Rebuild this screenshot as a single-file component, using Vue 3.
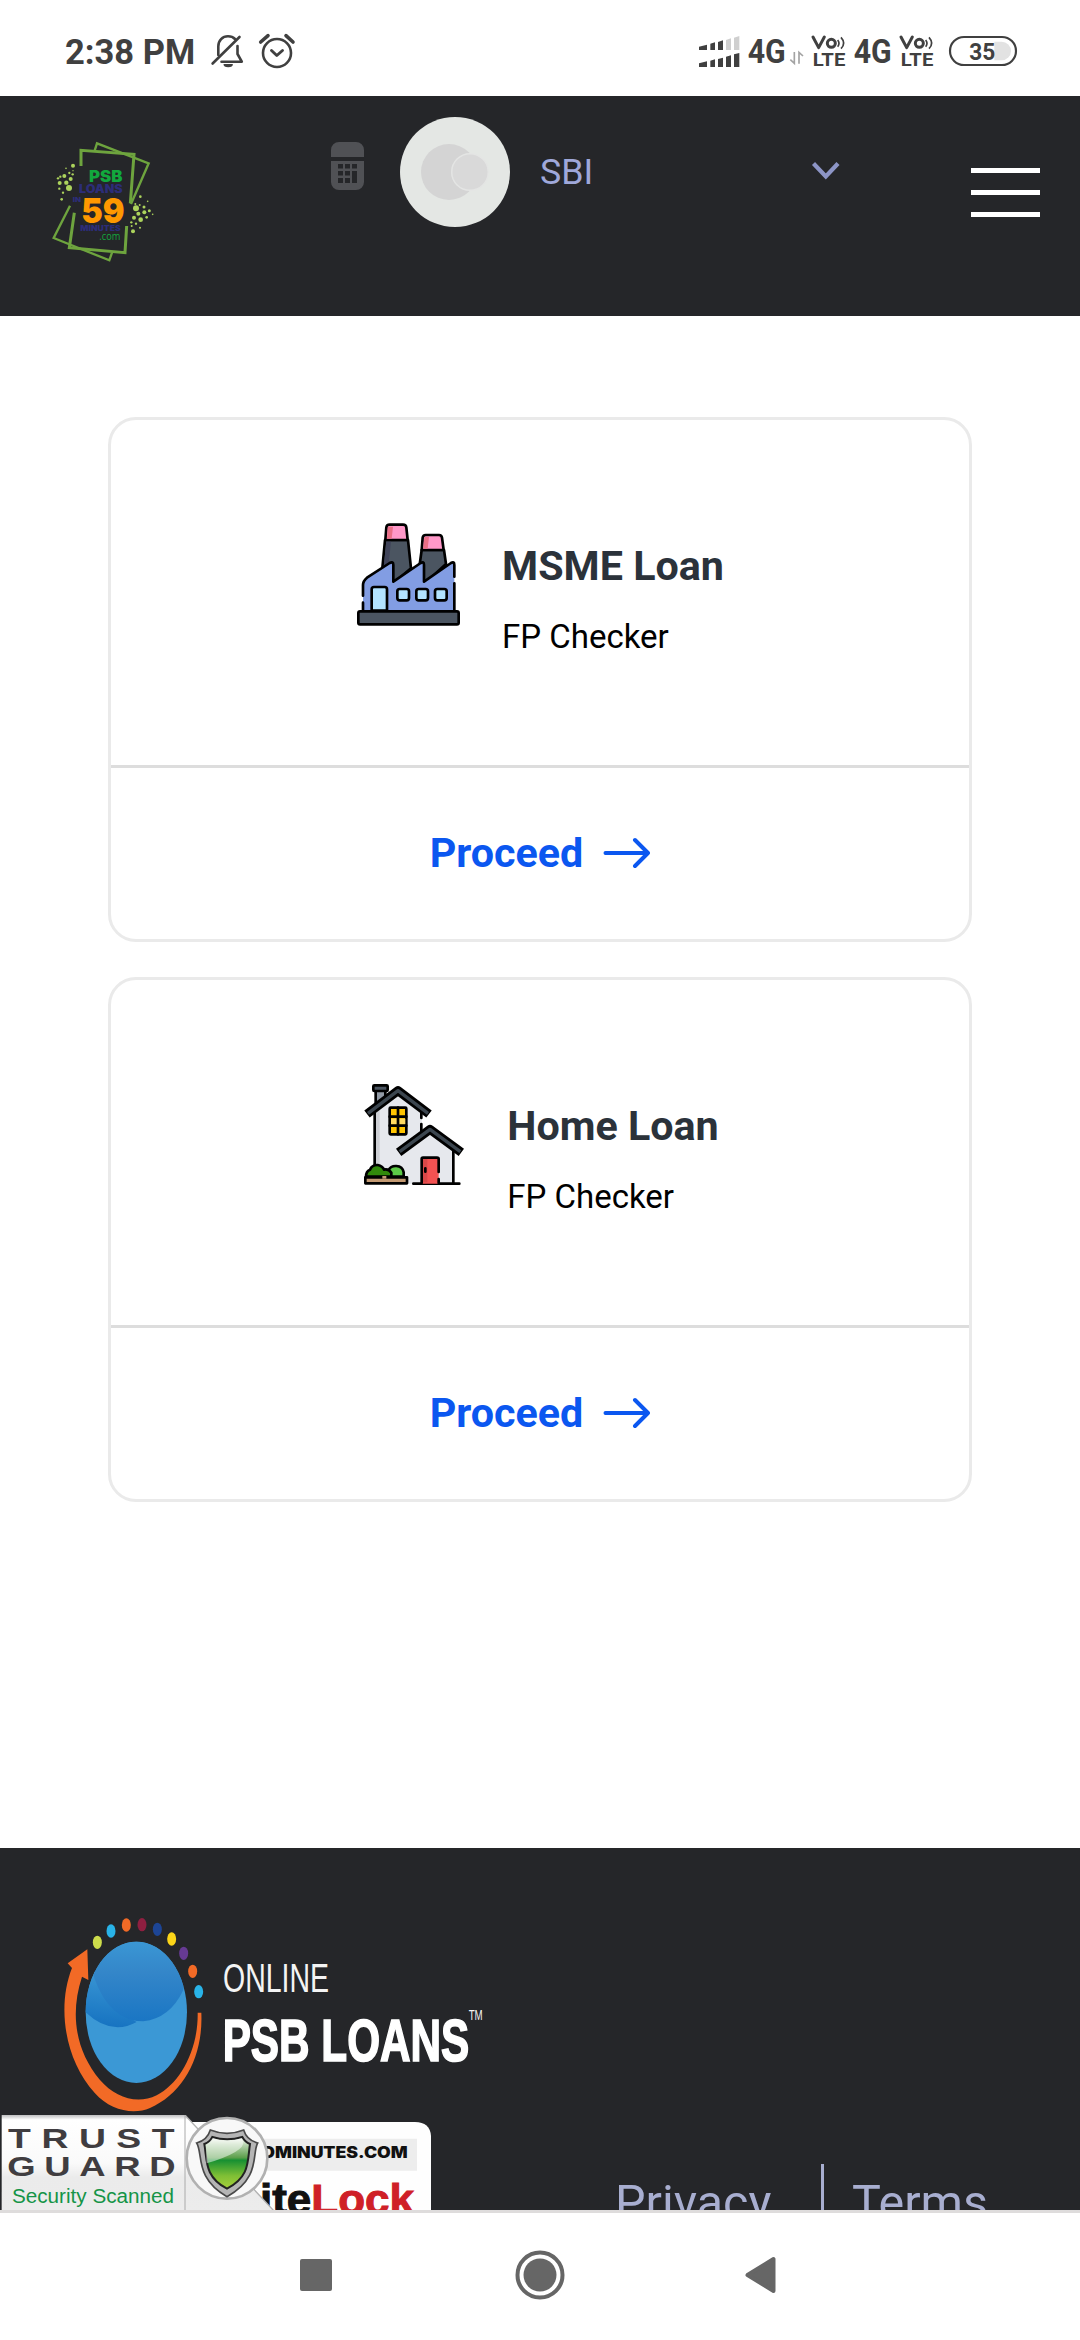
<script setup>
const loans = [
  { id: 'msme', title: 'MSME Loan', note: 'FP Checker' },
  { id: 'home', title: 'Home Loan', note: 'FP Checker' },
]

const leftDots = [
  [129, 137, 6], [108, 145, 2.5], [129, 152, 2], [118, 159, 3.5], [103, 168, 6], [128, 163, 3.5],
  [91, 170, 3.5], [84, 175, 3.5], [122, 177, 6], [89, 189, 6], [109, 188, 6.5], [117, 204, 9],
  [88, 206, 3.5], [99, 218, 3.5], [95, 238, 4],
]
const rightDots = [
  [331, 230, 4], [353, 244, 2.5], [316, 252, 3], [329, 255, 3], [318, 265, 9], [342, 261, 4.5],
  [358, 272, 4.5], [343, 277, 6], [325, 281, 6], [368, 283, 2.5], [312, 293, 6], [332, 299, 7],
  [350, 292, 4], [304, 307, 3.5], [318, 311, 3.5], [309, 334, 6], [330, 323, 3], [305, 318, 3],
]
const orbitDots = [
  [172, 157, '#cddc4b'], [213, 123, '#29b3e8'], [259, 105, '#f26a26'], [306, 104, '#8f1f40'],
  [352, 118, '#1d4595'], [395, 147, '#fcd518'], [431, 190, '#663a93'], [458, 244, '#f26a26'],
  [476, 305, '#29b3e8'],
]
</script>

<template>
  <div class="screen">
    <div class="status">
      <span class="clock">2:38 PM</span>
      <svg class="alerts" width="88" height="38" viewBox="209 32 88 38" fill="none" stroke="#404040" stroke-width="2.6" stroke-linecap="round">
        <path d="M218.3 55V46.500C218.300 40.500 222.500 36.300 228 36.300C231 36.300 233.400 37.300 235 39" />
        <path d="M237.500 46V54L241.800 61.700H221.500" stroke-linejoin="round" />
        <path d="M212.600 63.500L239.500 37" />
        <path d="M223.500 64h9.400a4.700 3.200 0 0 1-9.400 0z" fill="#404040" stroke="none" />
        <circle cx="277" cy="53" r="14" />
        <path d="M271.500 50.500L276.800 55.500L282.500 50.500" stroke-width="2.900" stroke-linejoin="round" />
        <path d="M260.700 42L268 35.700M293 42L286 35.700" stroke-width="3.600" />
      </svg>
      <svg class="network" width="322" height="38" viewBox="108 96 966 114">
        <g fill="#404040">
          <path d="M114 140l24-6v16h-24zM148 131l14-4v23h-14zM171 126l15-5v29h-15z" />
          <path d="M114 190l24-6v17h-24zM148 182l14-4v23h-14zM171 177l15-4v28h-15zM195 170l15-4v35h-15zM219 163l16-4v42h-16z" />
        </g>
        <path d="M195 120l15-5v35h-15zM219 113l16-5v42h-16z" fill="#cfcfcf" />
        <g class="net">
          <text x="260" y="188" font-size="97" textLength="114" lengthAdjust="spacingAndGlyphs">4G</text>
          <text x="578" y="188" font-size="97" textLength="114" lengthAdjust="spacingAndGlyphs">4G</text>
        </g>
        <path d="M400 156v34l-12-11M414 191v-34l12 11" fill="none" stroke="#a3a3a3" stroke-width="5" />
        <g v-for="x in [0, 264]" :key="x" :transform="`translate(${x} 0)`">
          <path d="M456 111l17 32 17-32" fill="none" stroke="#404040" stroke-width="9" stroke-linejoin="round" stroke-linecap="round" />
          <circle cx="511" cy="130" r="12" fill="none" stroke="#404040" stroke-width="9" />
          <path d="M530 120q8 10 0 20M540 112q16 18 0 34" fill="none" stroke="#404040" stroke-width="5" />
          <text class="lte" x="455" y="197" font-size="54" textLength="98" lengthAdjust="spacingAndGlyphs">LTE</text>
        </g>
        <path d="M1000 125h22a28 28 0 0 1 0 56h-22z" fill="#e2e2e2" />
        <rect x="867" y="111" width="198" height="84" rx="42" fill="none" stroke="#404040" stroke-width="6.500" />
        <text class="level" x="925" y="179" font-size="73" textLength="78" lengthAdjust="spacingAndGlyphs">35</text>
      </svg>
    </div>

    <header class="header">
      <svg class="logo" width="105" height="124" viewBox="60 60 315 372">
        <g fill="none" stroke="#6ea43e" stroke-width="9">
          <path d="M153 138V91L312 103L301 250" />
          <path d="M133 278L118 383L285 398L290 318" />
          <path d="M194 92L201 70L356 130L303 252" stroke-width="7" />
          <path d="M120 257L71 354L238 421L246 398" stroke-width="7" />
        </g>
        <g fill="#acd35c">
          <circle v-for="(d, i) in leftDots" :key="`l${i}`" :cx="d[0]" :cy="d[1]" :r="d[2]" />
          <circle v-for="(d, i) in rightDots" :key="`r${i}`" :cx="d[0]" :cy="d[1]" :r="d[2]" />
        </g>
        <g class="heavy">
          <text x="177" y="186" font-size="47" fill="#12a83d" textLength="100" lengthAdjust="spacingAndGlyphs">PSB</text>
          <text x="147" y="219" font-size="34" fill="#2c2d78" textLength="131" lengthAdjust="spacingAndGlyphs">LOANS</text>
          <text x="128" y="245" font-size="20" fill="#2c2d78" textLength="25" lengthAdjust="spacingAndGlyphs">IN</text>
          <text x="154" y="308" font-size="102" fill="#ff9800" textLength="130" lengthAdjust="spacingAndGlyphs">59</text>
          <text x="151" y="333" font-size="22" fill="#2c2d78" textLength="121" lengthAdjust="spacingAndGlyphs">MINUTES</text>
        </g>
        <text class="dotcom" x="208" y="359" font-size="32" fill="#12a83d" textLength="63" lengthAdjust="spacingAndGlyphs">.com</text>
      </svg>
      <svg class="calc" width="33" height="48" viewBox="0 0 33 48">
        <path d="M0 15V8a8 8 0 0 1 8-8h17a8 8 0 0 1 8 8v7zM0 19h33v21a8 8 0 0 1-8 8H8a8 8 0 0 1-8-8z" fill="#505155" />
        <path d="M7 22h5v4.500H7zM14 22h5v4.500h-5zM21 22h5v4.500h-5zM7 29h5v4.500H7zM14 29h5v4.500h-5zM21 29h5v12h-5zM7 36h5v5H7zM14 36h5v5h-5z" fill="#252629" />
      </svg>
      <svg class="avatar" width="110" height="110" viewBox="0 0 110 110">
        <circle cx="55" cy="55" r="55" fill="#e4e7e4" />
        <circle cx="49" cy="55" r="28" fill="#d4d4d4" />
        <circle cx="70" cy="55" r="18.300" fill="#d9d9d9" stroke="#e4e5e4" stroke-width="1.500" />
      </svg>
      <div class="bank">
        <span>SBI</span>
        <svg width="32" height="22" viewBox="0 0 32 22"><path d="M3.500 3.500L15.800 16.500L28 3.500" fill="none" stroke="#8d95c6" stroke-width="4.200" /></svg>
      </div>
      <div class="menu"><i></i><i></i><i></i></div>
    </header>

    <main class="main">
      <section v-for="loan in loans" :key="loan.id" class="card">
        <div class="info">
          <svg v-if="loan.id === 'msme'" width="106" height="106" viewBox="78 93 318 318" stroke="#000" stroke-width="8" stroke-linejoin="round" stroke-linecap="round">
            <path d="M157 235L165 150H234L243 235L190 280z" fill="#4b5561" />
            <path d="M161 230L169 154H183L176 222z" fill="#40445a" stroke="none" />
            <path d="M166 150L169 112Q170 104 179 104H219Q228 104 229 112L233 150z" fill="#ff98c9" />
            <path d="M171 146L174 110H189L185 146z" fill="#ea6f86" stroke="none" />
            <path d="M267 238L275 180H342L348 222L285 280z" fill="#4b5561" />
            <path d="M275 180L278 143Q279 135 287 135H327Q335 135 336 143L341 180z" fill="#ff98c9" />
            <path d="M280 176L283 141H297L293 176z" fill="#ea6f86" stroke="none" />
            <path d="M99 363V285Q99 273 111 263L179 219Q190 213 190 225V275L272 219Q282 213 282 225V275L363 219Q373 213 373 225V363z" fill="#829de3" stroke="none" />
            <path d="M99 317V285Q99 273 111 263L179 219Q190 213 190 225V275L272 219Q282 213 282 225V275L363 219Q373 213 373 225V260M373 280V360M99 338V360" fill="none" />
            <path d="M125 362V298Q125 291 132 291H164Q171 291 171 298V362z" fill="#b2e3ff" />
            <rect x="202" y="297" width="35" height="34" rx="7" fill="#b2e3ff" />
            <rect x="259" y="297" width="35" height="34" rx="7" fill="#b2e3ff" />
            <rect x="315" y="297" width="35" height="34" rx="7" fill="#b2e3ff" />
            <rect x="85" y="364" width="301" height="39" rx="5" fill="#4b5561" />
          </svg>
          <svg v-else width="106" height="106" viewBox="93 63 318 318" stroke="#000" stroke-width="8" stroke-linejoin="round" stroke-linecap="round">
            <path d="M134 371V145L204 98L275 150V218L300 210L370 265V371z" fill="#e6e8ed" stroke="none" />
            <path d="M138 145V320H149V135z" fill="#cdcfd4" stroke="none" />
            <path d="M137 92H166V118L137 138z" fill="#929aa5" />
            <rect x="130" y="76" width="43" height="17" rx="3" fill="#4b5561" />
            <path d="M134 158V320M274 158V174M274 192V216M370 268V371M250 371H388" fill="none" />
            <path d="M111 162L204 92L297 162" fill="none" stroke-width="27" stroke-linecap="butt" />
            <path d="M114 160L204 92L294 160" fill="none" stroke="#3c464f" stroke-width="10" stroke-linecap="butt" />
            <path d="M206 277L300 208L394 277" fill="none" stroke-width="27" stroke-linecap="butt" />
            <path d="M209 275L300 208L391 275" fill="none" stroke="#3c464f" stroke-width="10" stroke-linecap="butt" />
            <rect x="179" y="143" width="50" height="80" rx="3" fill="#ffc400" />
            <path d="M183 176H226V193H183z" fill="#ffda62" stroke="none" />
            <path d="M204 143V223M179 170H229M179 197H229" fill="none" />
            <path d="M275 371V297Q275 293 279 293H321Q326 293 326 297V371z" fill="#f25252" stroke="none" />
            <path d="M279 297H292V367H279z" fill="#d84848" stroke="none" />
            <path d="M275 369V297Q275 293 279 293H321Q326 293 326 297V336M326 357V369M286 325V335" fill="none" />
            <path d="M176 350V330Q182 317 199 318Q218 319 221 337V350z" fill="#5cc947" />
            <path d="M108 350Q108 334 120 329Q126 314 143 315Q158 318 162 329Q176 326 184 338V350z" fill="#318a0b" />
            <path d="M106 352H231V370H106z" fill="#c39972" />
            <path d="M157 352H169" stroke="#c39972" stroke-linecap="butt" />
          </svg>
          <div class="words">
            <h2>{{ loan.title }}</h2>
            <p>{{ loan.note }}</p>
          </div>
        </div>
        <a class="proceed">
          <span>Proceed</span>
          <svg width="47" height="32" viewBox="0 0 47 32"><path d="M2.500 16H45M32 3L45 16L32 29" fill="none" stroke="#0b57f0" stroke-width="4" stroke-linecap="round" stroke-linejoin="round" /></svg>
        </a>
      </section>
    </main>

    <footer class="footer">
      <svg class="brand" width="430" height="200" viewBox="60 75 1290 600">
        <defs>
          <linearGradient id="cap" x1="0" y1="0" x2="0" y2="1"><stop offset="0" stop-color="#3b98d5" /><stop offset=".4" stop-color="#3486c9" /><stop offset="1" stop-color="#1a76c4" /></linearGradient>
          <linearGradient id="side" x1=".6" y1="0" x2=".5" y2="1"><stop offset="0" stop-color="#3c98d5" /><stop offset="1" stop-color="#1673c1" /></linearGradient>
          <clipPath id="globe"><ellipse cx="289" cy="367" rx="152" ry="212" /></clipPath>
        </defs>
        <ellipse cx="289" cy="367" rx="152" ry="212" fill="#3b98d5" />
        <g clip-path="url(#globe)">
          <path d="M130 240H163Q205 350 290 396Q210 440 130 360z" fill="url(#side)" />
          <path d="M163 265Q210 395 310 394Q390 385 430 300L440 150H140z" fill="url(#cap)" />
        </g>
        <ellipse v-for="d in orbitDots" :key="d[0]" :cx="d[0]" :cy="d[1]" rx="13.500" ry="20" :fill="d[2]" />
        <path d="M142 178L83 220L96 234C50 350 74 510 165 610C210 661 280 676 330 654C430 610 490 500 484 368H473C475 480 420 580 350 616C290 645 225 622 180 570C105 480 90 370 126 260L145 270z" fill="#f26a26" />
        <text class="online" x="549" y="307" font-size="120" textLength="318" lengthAdjust="spacingAndGlyphs">ONLINE</text>
        <text class="psb" x="548" y="514" font-size="178" textLength="740" lengthAdjust="spacingAndGlyphs">PSB LOANS</text>
        <text class="tm" x="1286" y="389" font-size="42" textLength="42" lengthAdjust="spacingAndGlyphs">TM</text>
      </svg>
      <div class="bottom">
        <svg class="seals" width="435" height="96" viewBox="0 45 1305 288">
          <defs>
            <linearGradient id="paper" x1="0" y1="0" x2="0" y2="1"><stop offset="0" stop-color="#bdbdbf" /><stop offset=".05" stop-color="#fff" /><stop offset=".5" stop-color="#fafafa" /><stop offset=".65" stop-color="#ebebeb" /><stop offset="1" stop-color="#ececec" /></linearGradient>
            <linearGradient id="shield" x1="0" y1="0" x2="0" y2="1"><stop offset="0" stop-color="#fff" /><stop offset=".15" stop-color="#b9d5b0" /><stop offset=".4" stop-color="#5b9f4b" /><stop offset=".45" stop-color="#179032" /><stop offset=".75" stop-color="#7fbf35" /><stop offset="1" stop-color="#a7cf3b" /></linearGradient>
          </defs>
          <path d="M550 66H1245Q1290 66 1293 108V333H550z" fill="#fefefe" />
          <path d="M740 116H1251V212H740z" fill="#ededed" />
          <text class="site" x="784" y="173" font-size="46" textLength="439" lengthAdjust="spacingAndGlyphs">OMINUTES.COM</text>
          <text class="lock" x="780" y="342" font-size="126" textLength="462" lengthAdjust="spacingAndGlyphs">ite<tspan class="red">Lock</tspan></text>
          <path d="M5 45H555L822 333H5z" fill="url(#paper)" />
          <path d="M555 45V333" stroke="#aaa" stroke-width="3" />
          <path d="M555 45L822 333" stroke="#b0b0b0" stroke-width="4" />
          <g class="trust" transform="scale(1.35 1)">
            <text x="18" y="145" font-size="83" textLength="370" lengthAdjust="spacing">TRUST</text>
            <text x="16" y="228" font-size="81" textLength="374" lengthAdjust="spacing">GUARD</text>
          </g>
          <text class="scan" x="36" y="310" font-size="58" textLength="486" lengthAdjust="spacingAndGlyphs">Security Scanned</text>
          <circle cx="681" cy="175" r="121" fill="#f8f8f8" stroke="#b1b1b1" stroke-width="8" />
          <path d="M631 90Q681 110 731 90Q740 120 773 129C755 160 783 235 681 290C583 235 610 160 590 129Q622 120 631 90z" fill="#b5b5b5" stroke="#494949" stroke-width="5" />
          <path d="M637 111Q681 125 727 111Q735 126 750 132C742 180 752 230 681 266C612 230 622 180 613 132Q630 126 637 111z" fill="url(#shield)" stroke="#222" stroke-width="6" />
          <path d="M617 134Q630 128 638 115Q681 128 725 115L730 125Q735 155 620 190z" fill="#fff" opacity=".5" />
        </svg>
        <nav class="links"><a>Privacy</a><a>Terms</a></nav>
      </div>
    </footer>

    <div class="softkeys">
      <svg class="recent" width="32" height="32"><rect width="32" height="32" rx="2" fill="#666" /></svg>
      <svg class="homekey" width="50" height="50"><circle cx="25" cy="25" r="22.500" fill="none" stroke="#666" stroke-width="4" /><circle cx="25" cy="25" r="16.500" fill="#666" /></svg>
      <svg class="back" width="31" height="38"><path d="M2.500 19L28.500 3V35z" fill="#666" stroke="#666" stroke-width="4" stroke-linejoin="round" /></svg>
    </div>
  </div>
</template>

<style>
body { margin: 0; background: #fff; }
</style>

<style scoped>
.screen { width: 1080px; height: 2340px; overflow: hidden; display: flex; flex-direction: column; background: #fff; font-family: Roboto, sans-serif; }
svg { display: block; flex: none; }
.status { height: 96px; flex: none; display: flex; align-items: flex-start; color: #404040; }
.clock { width: 144px; padding: 32px 0 0 65px; font-size: 34.5px; line-height: 40px; font-weight: 700; white-space: nowrap; }
.alerts { margin-top: 32px; }
.network { margin: 32px 0 0 400px; }
.net, .lte, .level { font-family: Roboto, sans-serif; font-weight: 700; fill: #404040; }
.header { height: 220px; flex: none; display: flex; align-items: flex-start; background: #252629; }
.logo { margin: 44px 0 0 50px; }
.heavy { font-family: Inter, sans-serif; font-weight: 900; }
.dotcom { font-family: "Open Sans", sans-serif; }
.calc { margin: 46px 0 0 176px; }
.avatar { margin: 21px 0 0 36px; }
.bank { width: 302px; margin: 56px 0 0 30px; display: flex; justify-content: space-between; font-size: 35.75px; line-height: 40px; color: #9fa8da; }
.bank svg { margin-top: 8px; }
.menu { width: 69px; margin: 72px 0 0 129px; display: flex; flex-direction: column; gap: 17px; }
.menu i { height: 5px; background: #fff; }
.main { height: 1532px; flex: none; box-sizing: border-box; padding: 101px 108px 0; display: flex; flex-direction: column; gap: 35px; }
.card { height: 525px; box-sizing: border-box; border: 3px solid #eaeaea; border-radius: 28px; }
.info { height: 345px; box-sizing: border-box; padding-top: 101px; display: flex; justify-content: center; align-items: flex-start; gap: 40px; }
.words { padding-top: 21px; }
h2 { margin: 0; font-size: 41.25px; line-height: 48px; font-weight: 700; color: #2b323a; }
p { margin: 27px 0 0; font-size: 33px; line-height: 40px; color: #000; }
.proceed { height: 169px; padding-bottom: 2px; border-top: 3px solid #ddd; display: flex; align-items: center; justify-content: center; gap: 20px; font-size: 41.25px; font-weight: 700; color: #0b57f0; }
.footer { height: 362px; flex: none; box-sizing: border-box; padding-top: 67px; overflow: hidden; background: #252629; }
.brand { margin-left: 60px; }
.online, .tm { font-family: "Liberation Sans", sans-serif; fill: #f4f4f4; }
.psb { font-family: "Liberation Sans", sans-serif; font-weight: 700; fill: #fff; stroke: #fff; stroke-width: 5px; }
.bottom { height: 95px; display: flex; align-items: flex-start; overflow: hidden; }
.site { font-family: Inter, sans-serif; font-weight: 900; fill: #111; }
.lock { font-family: "Liberation Sans", sans-serif; font-weight: 700; fill: #111; stroke: #111; stroke-width: 3px; }
.red { fill: #cf2027; stroke: #cf2027; }
.trust { font-family: "Liberation Sans", sans-serif; font-weight: 700; fill: #403d40; }
.scan { font-family: "Liberation Sans", sans-serif; fill: #159447; }
.links { margin: 49px 0 0 180px; display: flex; font-size: 48.4px; line-height: 56px; color: #a8aed0; }
.links a { padding-top: 11px; }
.links a:first-child { width: 206px; }
.links a:last-child { padding-left: 28px; border-left: 3px solid #a8aed0; }
.softkeys { height: 130px; flex: none; box-sizing: border-box; border-top: 3px solid #dedcdc; padding-bottom: 3px; display: flex; align-items: center; background: #fff; }
.recent { margin-left: 300px; }
.homekey { margin-left: 183px; }
.back { margin-left: 180px; }
</style>
